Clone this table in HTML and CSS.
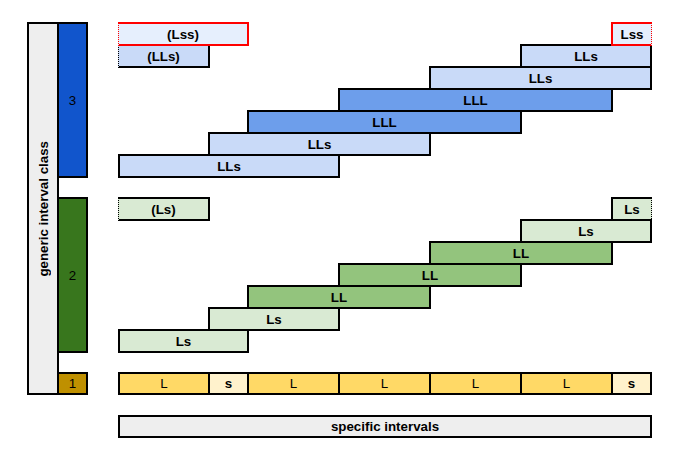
FILE: index.html
```html
<!DOCTYPE html>
<html>
<head>
<meta charset="utf-8">
<link rel="stylesheet" href="styles.css">
</head>
<body>
<div class="chart">
  <div class="cell axis-label"><span>generic interval class</span></div>
  <div class="cell num num-3">3</div>
  <div class="cell num num-2">2</div>
  <div class="cell num num-1">1</div>

  <!-- class 3 -->
  <div class="cell bar pale wrap-red wrap-left r1 c4-6">(Lss)</div>
  <div class="cell bar pale wrap-red wrap-right r1 c10-11">Lss</div>
  <div class="cell bar blue-l dotted-left r2 c4-5">(LLs)</div>
  <div class="cell bar blue-l r2 c9-11">LLs</div>
  <div class="cell bar blue-l r3 c8-11">LLs</div>
  <div class="cell bar blue-m r4 c7-10">LLL</div>
  <div class="cell bar blue-m r5 c6-9">LLL</div>
  <div class="cell bar blue-l r6 c5-8">LLs</div>
  <div class="cell bar blue-l r7 c4-7">LLs</div>

  <!-- class 2 -->
  <div class="cell bar green-l dotted-left r9 c4-5">(Ls)</div>
  <div class="cell bar green-l dotted-right r9 c10-11">Ls</div>
  <div class="cell bar green-l r10 c9-11">Ls</div>
  <div class="cell bar green-m r11 c8-10">LL</div>
  <div class="cell bar green-m r12 c7-9">LL</div>
  <div class="cell bar green-m r13 c6-8">LL</div>
  <div class="cell bar green-l r14 c5-7">Ls</div>
  <div class="cell bar green-l r15 c4-6">Ls</div>

  <!-- class 1 -->
  <div class="cell bar yel big r17 c4-5">L</div>
  <div class="cell bar yel-l r17 c5-6">s</div>
  <div class="cell bar yel big r17 c6-7">L</div>
  <div class="cell bar yel big r17 c7-8">L</div>
  <div class="cell bar yel big r17 c8-9">L</div>
  <div class="cell bar yel big r17 c9-10">L</div>
  <div class="cell bar yel-l r17 c10-11">s</div>

  <div class="cell bar spec r19 c4-11">specific intervals</div>
</div>
</body>
</html>
```

FILE: styles.css
```css
html, body {
  margin: 0;
  padding: 0;
  background: #ffffff;
}

.chart {
  display: grid;
  padding: 22px 0 24px 27px;
  grid-template-columns: 30px 29px 32px 90px 39px 91px 91px 91px 91px 39px 2px;
  grid-template-rows:
    repeat(7, 22px)
    21px
    repeat(7, 22px)
    21px
    21px
    22px
    21px
    2px;
  font-family: "Liberation Sans", Arial, sans-serif;
  font-size: 10pt;
  color: #000;
}

.cell {
  box-sizing: border-box;
  border: 2px solid #000;
  margin-right: -2px;
  margin-bottom: -2px;
  display: flex;
  align-items: center;
  justify-content: center;
  white-space: nowrap;
}

.axis-label {
  grid-column: 1;
  grid-row: 1 / 18;
  background: #eeeeee;
  font-weight: bold;
}
.axis-label span {
  writing-mode: vertical-rl;
  transform: rotate(180deg);
}

.num { grid-column: 2; }
.num-3 { grid-row: 1 / 8; background: #1155cc; }
.num-2 { grid-row: 9 / 16; background: #38761d; }
.num-1 { grid-row: 17; background: #bf9000; }

.bar { font-weight: bold; }
.bar.big { font-weight: normal; }

.pale { background: #e6effd; }
.blue-l { background: #c9daf8; }
.blue-m { background: #6d9eeb; }
.green-l { background: #d9ead3; }
.green-m { background: #93c47d; }
.yel { background: #ffd966; }
.yel-l { background: #fff2cc; }
.spec { background: #eeeeee; }

.wrap-red {
  border-color: #ff0000;
  z-index: 2;
}
.wrap-left { border-left: 1px dotted #ff0000; }
.wrap-right { border-right: 1px dotted #ff0000; }
.dotted-left { border-left: 1px dotted #000; }
.dotted-right { border-right: 1px dotted #000; }

/* rows */
.r1 { grid-row: 1; }
.r2 { grid-row: 2; }
.r3 { grid-row: 3; }
.r4 { grid-row: 4; }
.r5 { grid-row: 5; }
.r6 { grid-row: 6; }
.r7 { grid-row: 7; }
.r9 { grid-row: 9; }
.r10 { grid-row: 10; }
.r11 { grid-row: 11; }
.r12 { grid-row: 12; }
.r13 { grid-row: 13; }
.r14 { grid-row: 14; }
.r15 { grid-row: 15; }
.r17 { grid-row: 17; }
.r19 { grid-row: 19; }

/* column spans */
.c4-5 { grid-column: 4 / 5; }
.c4-6 { grid-column: 4 / 6; }
.c4-7 { grid-column: 4 / 7; }
.c4-11 { grid-column: 4 / 11; }
.c5-6 { grid-column: 5 / 6; }
.c5-7 { grid-column: 5 / 7; }
.c5-8 { grid-column: 5 / 8; }
.c6-7 { grid-column: 6 / 7; }
.c6-8 { grid-column: 6 / 8; }
.c6-9 { grid-column: 6 / 9; }
.c7-8 { grid-column: 7 / 8; }
.c7-9 { grid-column: 7 / 9; }
.c7-10 { grid-column: 7 / 10; }
.c8-9 { grid-column: 8 / 9; }
.c8-10 { grid-column: 8 / 10; }
.c8-11 { grid-column: 8 / 11; }
.c9-10 { grid-column: 9 / 10; }
.c9-11 { grid-column: 9 / 11; }
.c10-11 { grid-column: 10 / 11; }
```
